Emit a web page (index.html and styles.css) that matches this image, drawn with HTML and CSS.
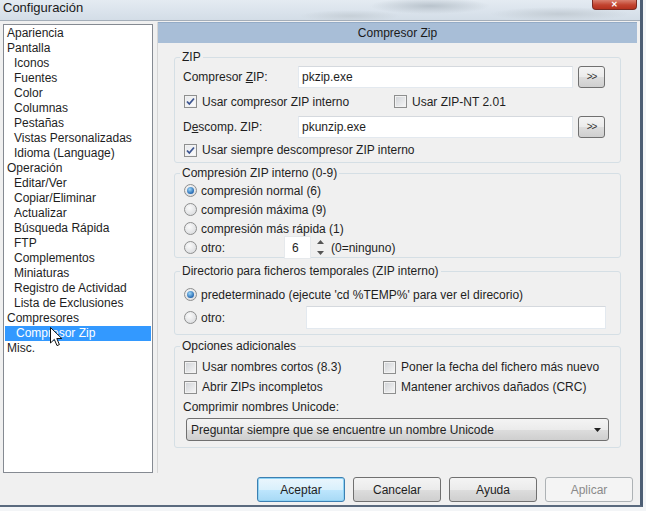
FILE: index.html
```html
<!DOCTYPE html>
<html lang="es">
<head>
    <meta charset="UTF-8">
    <title>Configuración</title>
    <link rel="stylesheet" href="styles.css">
</head>
<body>
<div class="window">
    <!-- Barra de título -->
    <div class="titlebar">
        <span class="title">Configuración</span>
        <button class="btn-close">&#x2715;</button>
    </div>

    <div class="main">
        <!-- Árbol de secciones -->
        <ul class="tree">
            <li>Apariencia</li>
            <li>Pantalla</li>
            <li class="sub">Iconos</li>
            <li class="sub">Fuentes</li>
            <li class="sub">Color</li>
            <li class="sub">Columnas</li>
            <li class="sub">Pestañas</li>
            <li class="sub">Vistas Personalizadas</li>
            <li class="sub">Idioma (Language)</li>
            <li>Operación</li>
            <li class="sub">Editar/Ver</li>
            <li class="sub">Copiar/Eliminar</li>
            <li class="sub">Actualizar</li>
            <li class="sub">Búsqueda Rápida</li>
            <li class="sub">FTP</li>
            <li class="sub">Complementos</li>
            <li class="sub">Miniaturas</li>
            <li class="sub">Registro de Actividad</li>
            <li class="sub">Lista de Exclusiones</li>
            <li>Compresores</li>
            <li class="sub selected">Compresor Zip</li>
            <li>Misc.</li>
            <svg class="cursor" width="13" height="20" viewBox="0 0 13 20">
                <path d="M0.5 0.5 L0.5 16 L4.3 12.4 L7 18.6 L9.4 17.6 L6.8 11.5 L11.8 11.5 Z" fill="#fff" stroke="#111" stroke-width="1" stroke-linejoin="round"/>
            </svg>
        </ul>

        <!-- Panel de opciones -->
        <div class="panel">
            <div class="panel-header">Compresor Zip</div>

            <fieldset class="group group-zip">
                <legend>ZIP</legend>
                <div class="field-row">
                    <span class="field-label">Compresor <u>Z</u>IP:</span>
                    <span class="text-input">pkzip.exe</span>
                    <button class="btn-browse">&gt;&gt;</button>
                </div>
                <div class="check-row">
                    <span class="col-zip"><span class="check checked"><svg width="11" height="11" viewBox="0 0 11 11"><path d="M2 5.5 L4.3 8 L9 2.5" fill="none" stroke="#3d5590" stroke-width="1.8"/></svg></span>Usar compresor ZIP interno</span>
                    <span class="check"></span>Usar ZIP-NT 2.01
                </div>
                <div class="field-row">
                    <span class="field-label">D<u>e</u>scomp. ZIP:</span>
                    <span class="text-input">pkunzip.exe</span>
                    <button class="btn-browse">&gt;&gt;</button>
                </div>
                <div class="check-row last">
                    <span class="check checked"><svg width="11" height="11" viewBox="0 0 11 11"><path d="M2 5.5 L4.3 8 L9 2.5" fill="none" stroke="#3d5590" stroke-width="1.8"/></svg></span>Usar siempre descompresor ZIP interno
                </div>
            </fieldset>

            <fieldset class="group group-level">
                <legend>Compresión ZIP interno (0-9)</legend>
                <div class="radio-row"><span class="radio on"></span>compresión normal (6)</div>
                <div class="radio-row"><span class="radio"></span>compresión máxima (9)</div>
                <div class="radio-row"><span class="radio"></span>compresión más rápida (1)</div>
                <div class="radio-row">
                    <span class="radio"></span><span class="opt-label">otro:</span>
                    <span class="spin-input">6</span>
                    <span class="spin-arrows">
                        <svg width="7" height="4" viewBox="0 0 7 4"><path d="M0 4 L3.5 0 L7 4 Z" fill="#555"/></svg>
                        <svg width="7" height="4" viewBox="0 0 7 4"><path d="M0 0 L3.5 4 L7 0 Z" fill="#555"/></svg>
                    </span>
                    <span class="spin-note">(0=ninguno)</span>
                </div>
            </fieldset>

            <fieldset class="group group-temp">
                <legend>Directorio para ficheros temporales (ZIP interno)</legend>
                <div class="radio-row tall"><span class="radio on"></span>predeterminado (ejecute 'cd %TEMP%' para ver el direcorio)</div>
                <div class="radio-row tall">
                    <span class="radio"></span><span class="opt-label wide">otro:</span>
                    <span class="text-input dir-input"></span>
                </div>
            </fieldset>

            <fieldset class="group group-extra">
                <legend>Opciones adicionales</legend>
                <div class="option-row">
                    <span class="col-extra"><span class="check"></span>Usar nombres cortos (8.3)</span>
                    <span class="check"></span>Poner la fecha del fichero más nuevo
                </div>
                <div class="option-row">
                    <span class="col-extra"><span class="check"></span>Abrir ZIPs incompletos</span>
                    <span class="check"></span>Mantener archivos dañados (CRC)
                </div>
                <div class="option-row">Comprimir nombres Unicode:</div>
                <div class="select">
                    <span>Preguntar siempre que se encuentre un nombre Unicode</span>
                    <svg width="7" height="4" viewBox="0 0 7 4"><path d="M0 0 L3.5 4 L7 0 Z" fill="#222"/></svg>
                </div>
            </fieldset>
        </div>
    </div>

    <!-- Botones -->
    <div class="footer">
        <button class="btn btn-default">Aceptar</button>
        <button class="btn">Cancelar</button>
        <button class="btn">Ayuda</button>
        <button class="btn btn-disabled">Aplicar</button>
    </div>
</div>
</body>
</html>
```

FILE: styles.css
```css
/* General */
body {
    margin: 0;
    background-color: #f3f5f7;
    font-family: "Liberation Sans", Arial, sans-serif;
    font-size: 12px;
    color: #1e1e1e;
}

/* Ventana */
.window {
    width: 640px;
    height: 505px;
    background-color: #f0f0f0;
    border-right: 3px solid #4d5e74;
    border-bottom: 2px solid #5a6a7e;
    display: flex;
    flex-direction: column;
}

.titlebar {
    height: 20px;
    display: flex;
    align-items: flex-start;
    border-bottom: 1px solid #a4aeb9;
    background:
        radial-gradient(ellipse 60px 8px at 430px 6px, #b9c3cc, transparent),
        radial-gradient(ellipse 70px 7px at 560px 14px, #c3ccd4, transparent),
        radial-gradient(ellipse 50px 6px at 350px 16px, #c6cfd7, transparent),
        linear-gradient(#e4ebf2, #d3dde7);
}

.title {
    font-size: 13px;
    line-height: 15px;
    padding-left: 3px;
    color: #1a1a1a;
}

.btn-close {
    margin-left: auto;
    margin-right: 3px;
    width: 45px;
    height: 10px;
    padding: 0;
    border: 1px solid #7a2a22;
    border-top: none;
    border-radius: 0 0 4px 4px;
    background: linear-gradient(#d9806f, #c2432f 55%, #b5321f);
    color: #fff;
    font-size: 8px;
    line-height: 9px;
    font-weight: bold;
}

.main {
    height: 452px;
    display: flex;
    align-items: flex-start;
    gap: 4px;
    padding-left: 3px;
    box-sizing: border-box;
}

/* Árbol */
.tree {
    list-style: none;
    position: relative;
    margin: 3px 0 0;
    padding: 1px 0;
    width: 150px;
    height: 449px;
    box-sizing: border-box;
    border: 1px solid #858a92;
    background-color: #fff;
}

.tree li {
    line-height: 15px;
    padding-left: 3px;
    white-space: nowrap;
}

.tree li.sub {
    padding-left: 10px;
}

.tree li.selected {
    margin: 0 1px;
    padding-left: 11px;
    background-color: #3399ff;
    color: #fff;
}

.cursor {
    position: absolute;
    left: 46px;
    top: 302px;
}

/* Panel */
.panel {
    width: 480px;
    height: 451px;
    margin-top: 1px;
    box-sizing: border-box;
    border-left: 1px solid #d6d6d6;
}

.panel-header {
    height: 21px;
    line-height: 21px;
    text-align: center;
    background-color: #a8bed7;
    border-top: 1px solid #93abc6;
    box-sizing: border-box;
    color: #1a1a1a;
}

.group {
    margin: 3px 16px 0;
    padding: 0 8px;
    border: 1px solid #d5dfe5;
    border-radius: 3px;
    min-width: 0;
}

.group legend {
    margin-left: -3px;
    padding: 0 2px;
    line-height: 15px;
}

.group-zip {
    margin-top: 7px;
}

.group-temp {
    margin-top: 6px;
    padding-top: 4px;
    padding-bottom: 5px;
}

.group-extra {
    margin-top: 4px;
    padding-top: 3px;
    padding-bottom: 6px;
}

/* Filas */
.field-row {
    height: 23px;
    display: flex;
    align-items: center;
}

.field-label {
    width: 115px;
    flex: none;
}

.check-row {
    height: 27px;
    display: flex;
    align-items: center;
}

.check-row.last {
    height: 24px;
}

.col-zip {
    width: 210px;
    display: flex;
    align-items: center;
}

.col-extra {
    width: 199px;
    display: flex;
    align-items: center;
}

.option-row {
    height: 20px;
    display: flex;
    align-items: center;
}

.radio-row {
    height: 19px;
    display: flex;
    align-items: center;
}

.radio-row.tall {
    height: 23px;
}

.opt-label {
    width: 83px;
}

.opt-label.wide {
    width: 105px;
}

/* Controles */
.check {
    width: 13px;
    height: 13px;
    box-sizing: border-box;
    flex: none;
    margin: 0 5px 0 1px;
    border: 1px solid #8e8f8f;
    background: linear-gradient(135deg, #cfd2d6, #f7f7f7);
    box-shadow: inset 0 0 0 1px #f2f2f2;
    display: flex;
    align-items: center;
    justify-content: center;
}

.check.checked {
    background: linear-gradient(135deg, #e6e8eb, #fdfdfd);
}

.radio {
    width: 13px;
    height: 13px;
    box-sizing: border-box;
    flex: none;
    margin: 0 4px 0 1px;
    border: 1px solid #8e8f8f;
    border-radius: 50%;
    background: radial-gradient(circle at 40% 35%, #fafafa, #d4d6d9);
    position: relative;
}

.radio.on::after {
    content: "";
    position: absolute;
    left: 2px;
    top: 2px;
    width: 7px;
    height: 7px;
    border-radius: 50%;
    background: radial-gradient(circle at 40% 35%, #9fd8fa, #1d62ad 75%);
}

.text-input {
    width: 275px;
    height: 22px;
    box-sizing: border-box;
    padding-left: 3px;
    line-height: 20px;
    background-color: #fff;
    border: 1px solid #e3e9ef;
    border-top-color: #d5d9de;
}

.dir-input {
    width: 300px;
    height: 23px;
}

.btn-browse {
    width: 27px;
    height: 22px;
    margin-left: 5px;
    padding: 0 0 1px;
    border: 1px solid #707070;
    border-radius: 3px;
    background: linear-gradient(#f4f4f4, #ebebeb 50%, #dddddd 51%, #cfcfcf);
    font-family: "Liberation Sans", Arial, sans-serif;
    font-size: 10px;
    letter-spacing: -1px;
    color: #333;
}

.spin-input {
    width: 27px;
    height: 23px;
    box-sizing: border-box;
    padding-left: 7px;
    line-height: 23px;
    background-color: #fff;
    border: 1px solid #e6e9ec;
}

.spin-arrows {
    width: 12px;
    height: 21px;
    margin-left: 3px;
    display: flex;
    flex-direction: column;
    align-items: center;
    justify-content: space-between;
    padding: 3px 0;
    box-sizing: border-box;
}

.spin-note {
    margin-left: 5px;
}

.select {
    width: 423px;
    height: 23px;
    margin: 1px 0 0 3px;
    box-sizing: border-box;
    padding: 0 7px 0 4px;
    border: 1px solid #707070;
    border-radius: 3px;
    background: linear-gradient(#f4f4f4, #ebebeb 50%, #dddddd 51%, #cfcfcf);
    display: flex;
    align-items: center;
    justify-content: space-between;
}

/* Botones inferiores */
.footer {
    display: flex;
    justify-content: flex-end;
    gap: 8px;
    padding: 4px 7px 0 0;
}

.btn {
    width: 88px;
    height: 25px;
    padding: 0;
    border: 1px solid #707070;
    border-radius: 3px;
    background: linear-gradient(#f4f4f4, #ebebeb 50%, #dddddd 51%, #cfcfcf);
    font-family: "Liberation Sans", Arial, sans-serif;
    font-size: 12px;
    color: #1e1e1e;
}

.btn-default {
    border-color: #3c7fb1;
    background: linear-gradient(#eaf6fd, #d9f0fc 50%, #bee6fd 51%, #a7d9f5);
    box-shadow: inset 0 0 0 1px #8fd3f5;
}

.btn-disabled {
    border-color: #adb2b5;
    background: #f4f4f4;
    color: #8a8a8a;
}
```
